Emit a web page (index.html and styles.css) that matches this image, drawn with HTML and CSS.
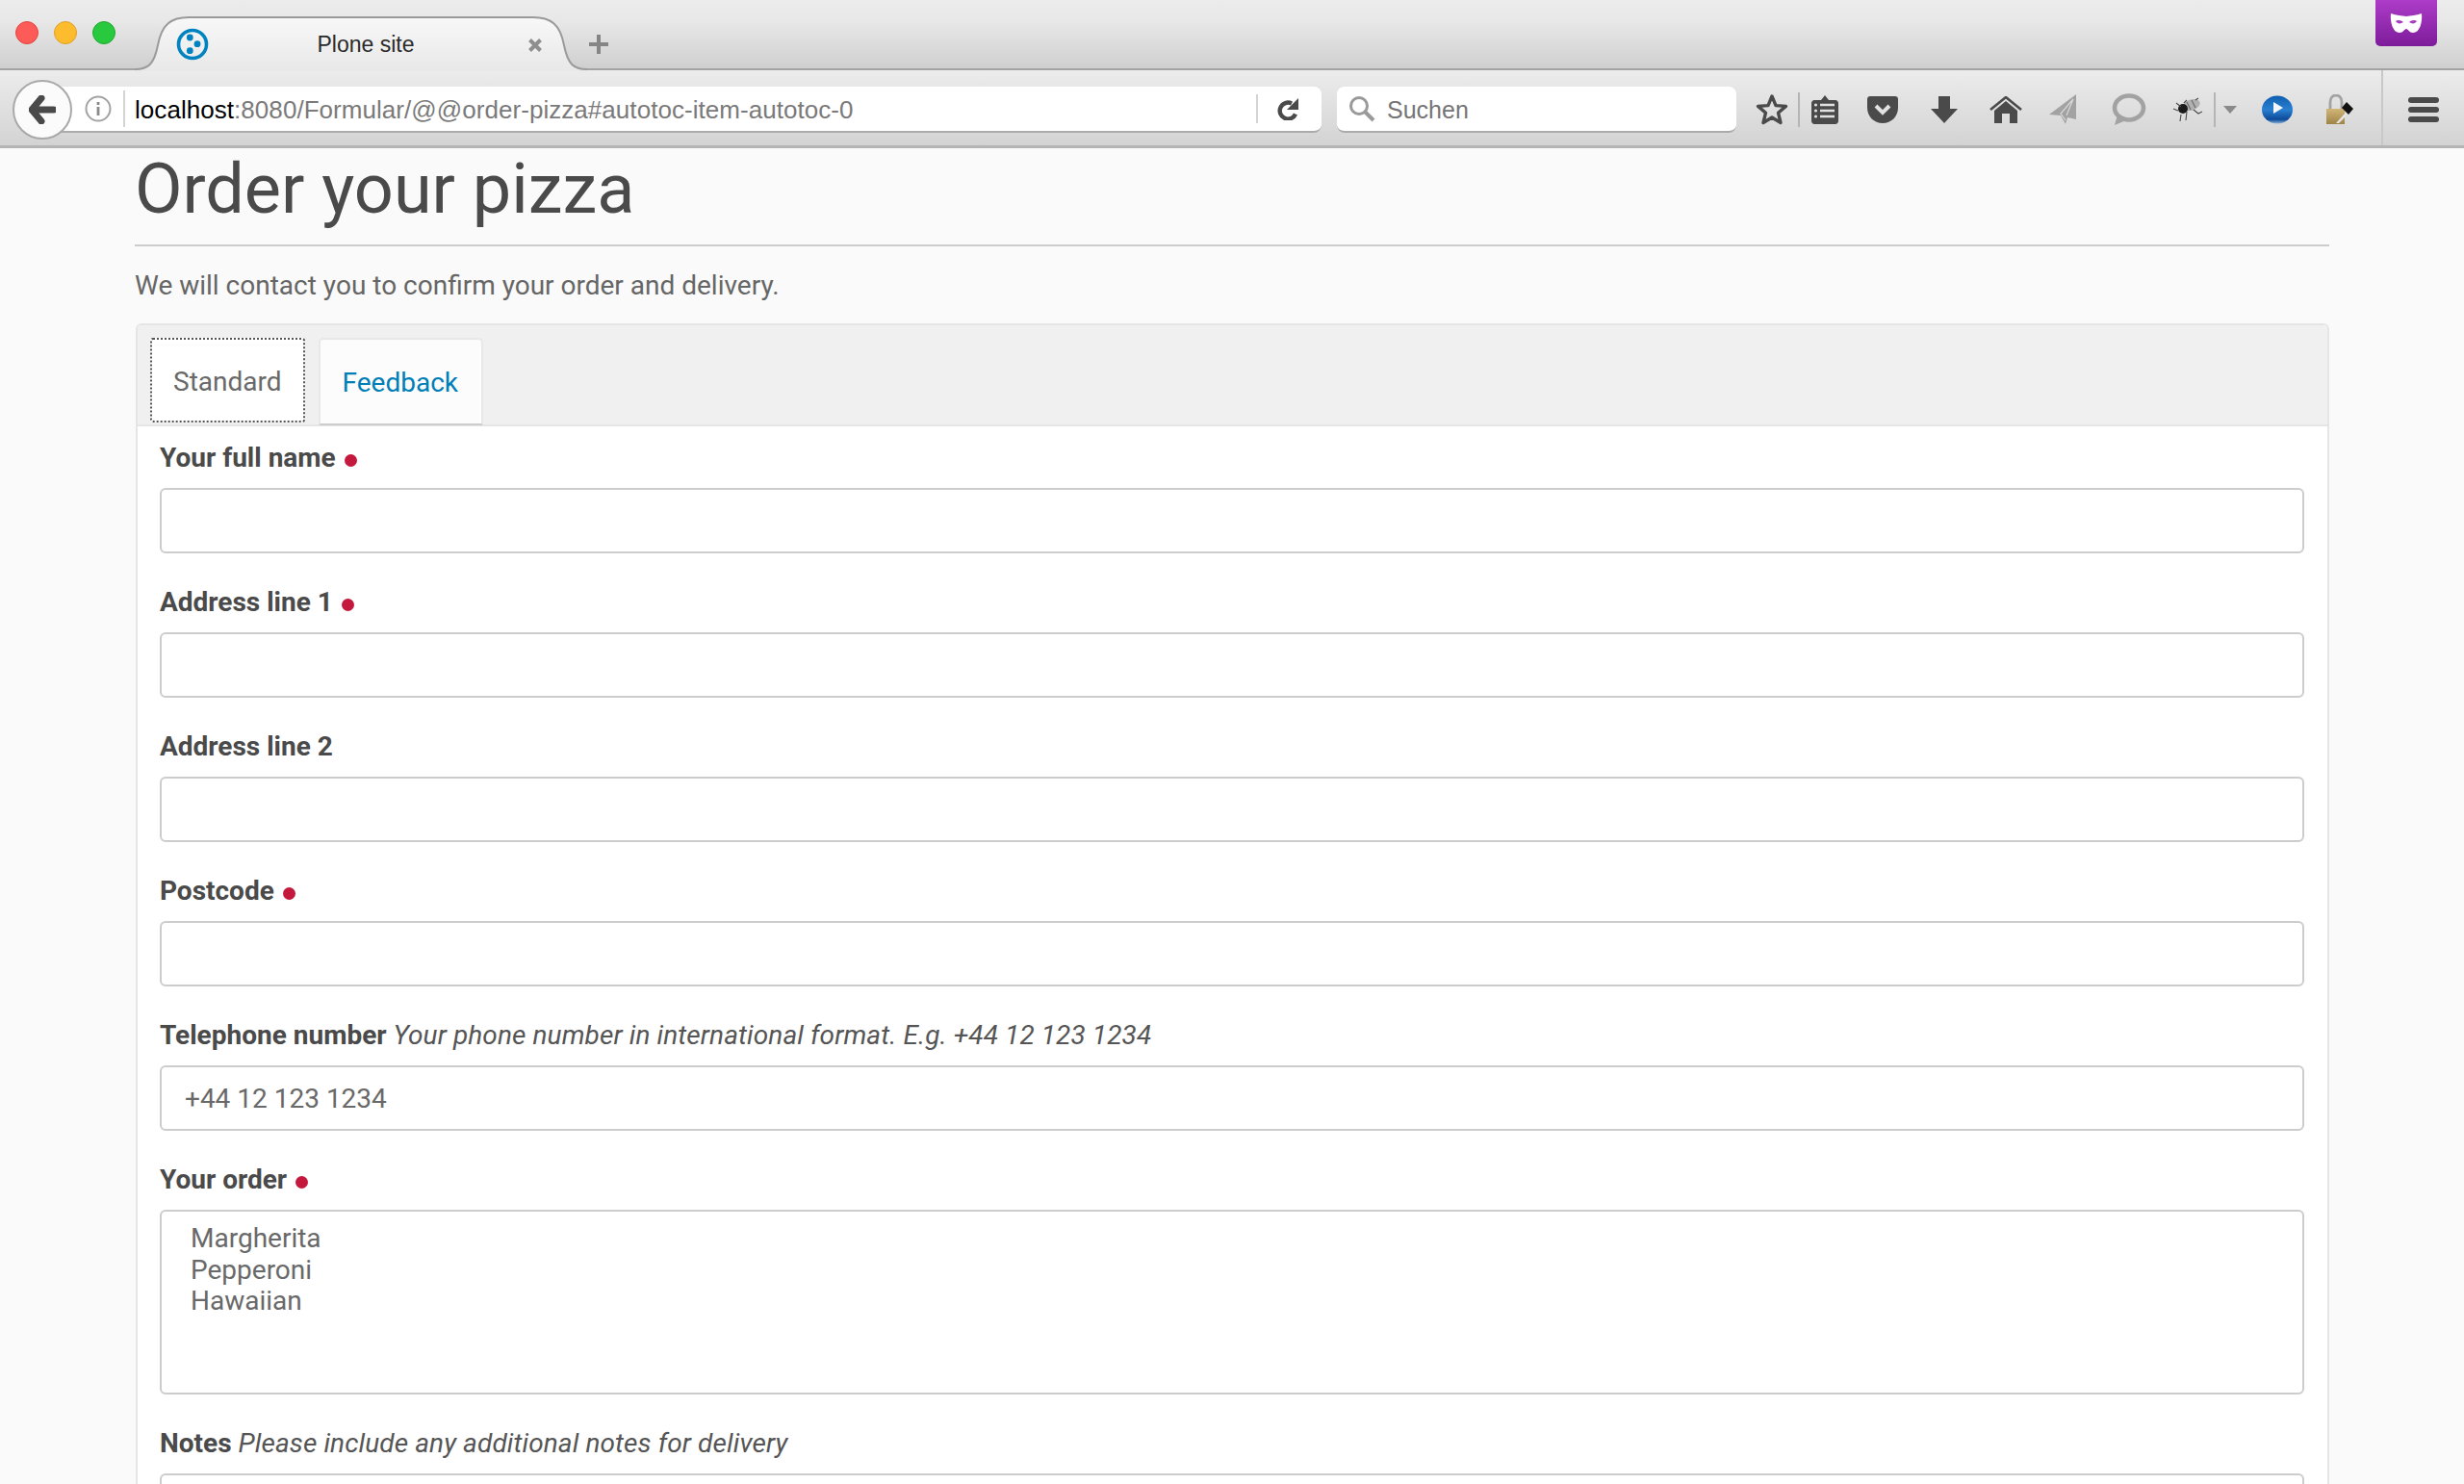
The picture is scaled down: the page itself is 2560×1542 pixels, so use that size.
FILE: index.html
```html
<!DOCTYPE html>
<html lang="en">
<head>
    <meta charset="UTF-8">
    <title>Plone site</title>
    <link rel="stylesheet" href="styles.css">
</head>
<body>

<header class="browser">
    <div class="tabbar">
        <div class="lights">
            <span class="light light-red"></span>
            <span class="light light-yellow"></span>
            <span class="light light-green"></span>
        </div>
        <div class="tab">
            <svg class="tab-shape" width="470" height="57" viewBox="0 0 470 57">
                <defs>
                    <linearGradient id="tabfill" x1="0" y1="0" x2="0" y2="1">
                        <stop offset="0" stop-color="#f8f8f8"/>
                        <stop offset="1" stop-color="#e8e8e8"/>
                    </linearGradient>
                </defs>
                <path d="M0 57V55C14 55 20 50 24 30C28 8 38 1 56 1H414C432 1 442 8 446 30C450 50 456 55 470 55V57Z" fill="url(#tabfill)"/>
                <path d="M0 55C14 55 20 50 24 30C28 8 38 1 56 1H414C432 1 442 8 446 30C450 50 456 55 470 55" fill="none" stroke="#9a9a9a" stroke-width="2"/>
            </svg>
            <svg class="favicon" width="34" height="34" viewBox="0 0 34 34">
                <circle cx="17" cy="17" r="14.5" fill="none" stroke="#0083be" stroke-width="3.6"/>
                <circle cx="14.300" cy="10" r="3.400" fill="#0083be"/>
                <circle cx="22" cy="16.700" r="3.400" fill="#0083be"/>
                <circle cx="14.300" cy="23.700" r="3.400" fill="#0083be"/>
            </svg>
            <span class="tab-title">Plone site</span>
            <svg class="tab-close" width="16" height="16" viewBox="0 0 16 16">
                <path d="M2.5 2.5L13.5 13.5M13.5 2.5L2.5 13.5" stroke="#8e8e8e" stroke-width="4"/>
            </svg>
        </div>
        <svg class="new-tab" width="20" height="20" viewBox="0 0 20 20">
            <path d="M10 0V20M0 10H20" stroke="#858585" stroke-width="4"/>
        </svg>
        <div class="mask-btn">
            <svg width="34" height="22" viewBox="0 0 34 22">
                <path d="M1 1C7 3 12 3 17 4C22 3 27 3 33 1C34 10 31 21 24 21C20 21 19 17 17 17C15 17 14 21 10 21C3 21 0 10 1 1Z" fill="#fff"/>
                <path d="M6 9C8 7 12 8 14 10C11 12 8 12 6 9ZM28 9C26 7 22 8 20 10C23 12 26 12 28 9Z" fill="#a73bc2"/>
            </svg>
        </div>
    </div>

    <div class="toolbar">
        <button class="back-btn">
            <svg width="28" height="30" viewBox="0 0 28 30">
                <path d="M13 3L3 15L13 27M4 15H26" fill="none" stroke="#4a4a4a" stroke-width="7" stroke-linejoin="round" stroke-linecap="round"/>
            </svg>
        </button>
        <div class="urlbar">
            <svg class="info-icon" width="28" height="28" viewBox="0 0 28 28">
                <circle cx="14" cy="14" r="12.5" fill="none" stroke="#a3a3a3" stroke-width="2"/>
                <rect x="12.6" y="12" width="2.8" height="9" fill="#8a8a8a"/>
                <rect x="12.6" y="7" width="2.8" height="3" fill="#8a8a8a"/>
            </svg>
            <span class="url-sep"></span>
            <span class="url-text"><span class="url-host">localhost</span>:8080/Formular/@@order-pizza#autotoc-item-autotoc-0</span>
            <span class="url-sep url-sep-end"></span>
            <svg class="reload-icon" width="24" height="24" viewBox="0 0 24 24">
                <path d="M16 6.500A8.500 8.500 0 1 0 20 17.500" fill="none" stroke="#4a4a4a" stroke-width="4.400"/>
                <path d="M23 1V13H11Z" fill="#4a4a4a"/>
            </svg>
        </div>
        <div class="searchbar">
            <svg width="30" height="30" viewBox="0 0 30 30">
                <circle cx="12" cy="12" r="8.5" fill="none" stroke="#9a9a9a" stroke-width="3"/>
                <path d="M18 18L27 27" stroke="#9a9a9a" stroke-width="4"/>
            </svg>
            <span class="search-text">Suchen</span>
        </div>

        <svg class="tool i-star" width="34" height="34" viewBox="0 0 34 34">
            <path d="M17 3L21 12.6L31.5 13.4L23.5 20.2L26 30.5L17 25L8 30.5L10.5 20.2L2.5 13.4L13 12.6Z" fill="none" stroke="#4a4a4a" stroke-width="3.4" stroke-linejoin="round"/>
        </svg>
        <span class="tool-sep i-sep1"></span>
        <svg class="tool i-clip" width="28" height="30" viewBox="0 0 28 30">
            <path d="M3 5H10L14 0L18 5H25C26.5 5 28 6.5 28 8V27C28 28.5 26.5 30 25 30H3C1.500 30 0 28.500 0 27V8C0 6.500 1.500 5 3 5Z" fill="#4a4a4a"/>
            <path d="M9 10H24M9 16H24M9 22H24" stroke="#e2e2e2" stroke-width="2.600"/>
            <circle cx="4.500" cy="10" r="1.600" fill="#e2e2e2"/>
            <circle cx="4.500" cy="16" r="1.600" fill="#e2e2e2"/>
            <circle cx="4.500" cy="22" r="1.600" fill="#e2e2e2"/>
        </svg>
        <svg class="tool i-pocket" width="32" height="28" viewBox="0 0 32 28">
            <path d="M3 0H29C30.700 0 32 1.300 32 3V12C32 21 25 28 16 28C7 28 0 21 0 12V3C0 1.300 1.300 0 3 0Z" fill="#4a4a4a"/>
            <path d="M9 10L16 17L23 10" fill="none" stroke="#e2e2e2" stroke-width="4"/>
        </svg>
        <svg class="tool i-down" width="30" height="28" viewBox="0 0 30 28">
            <path d="M9 0H21V13H29L15 28L1 13H9Z" fill="#4a4a4a"/>
        </svg>
        <svg class="tool i-home" width="34" height="28" viewBox="0 0 34 28">
            <path d="M1 14L17 1L33 14" fill="none" stroke="#4a4a4a" stroke-width="2.600"/>
            <path d="M17 5L29 15V28H21V18H13V28H5V15Z" fill="#4a4a4a"/>
        </svg>
        <svg class="tool i-plane" width="30" height="32" viewBox="0 0 30 32">
            <path d="M28 0L0 21L12 22L17 31L19 24L28 26Z" fill="#a2a2a2"/>
            <path d="M25 5L12 20L17 27M25 5L18 22" fill="none" stroke="#d8d8d8" stroke-width="1.200"/>
        </svg>
        <svg class="tool i-bubble" width="38" height="34" viewBox="0 0 38 34">
            <ellipse cx="20" cy="15" rx="15" ry="12.500" fill="none" stroke="#a2a2a2" stroke-width="4.600"/>
            <path d="M5 33L8 22L17 28Z" fill="#a2a2a2"/>
        </svg>
        <svg class="tool i-bug" width="32" height="26" viewBox="0 0 32 26">
            <ellipse cx="20" cy="8" rx="9" ry="5.500" fill="#b0b0b0" transform="rotate(-20 20 8)"/>
            <path d="M15 5L19 13M20 3L24 11" stroke="#5a5a5a" stroke-width="1"/>
            <ellipse cx="11" cy="12" rx="5" ry="5" fill="#1a1a1a"/>
            <path d="M1 12L6 14M4 6L9 10M9 18L8 25M15 15L14 24M22 13L27 17L31 15M24 3L27 1M12 6L15 3" stroke="#4a4a4a" stroke-width="1.100" fill="none"/>
        </svg>
        <span class="tool-sep i-sep2"></span>
        <svg class="tool i-tri" width="14" height="8" viewBox="0 0 14 8">
            <path d="M0 0H14L7 8Z" fill="#8a8a8a"/>
        </svg>
        <svg class="tool i-play" width="34" height="30" viewBox="0 0 34 30">
            <defs>
                <linearGradient id="playfill" x1="0" y1="0" x2="0" y2="1">
                    <stop offset="0" stop-color="#0f5fb0"/>
                    <stop offset="0.500" stop-color="#2a7fd0"/>
                    <stop offset="0.850" stop-color="#0d4a9a"/>
                    <stop offset="1" stop-color="#8fb4d8"/>
                </linearGradient>
            </defs>
            <ellipse cx="17" cy="15" rx="16" ry="14.500" fill="url(#playfill)"/>
            <path d="M13 7L23 13L13 19Z" fill="#f2f6fb"/>
        </svg>
        <svg class="tool i-lock" width="30" height="32" viewBox="0 0 30 32">
            <defs>
                <linearGradient id="lockfill" x1="0" y1="0" x2="0" y2="1">
                    <stop offset="0" stop-color="#d2b678"/>
                    <stop offset="1" stop-color="#9f8448"/>
                </linearGradient>
            </defs>
            <path d="M5 15V8C5 3 8 1 11 1C14 1 17 3 17 8V15" fill="none" stroke="#a2a2a2" stroke-width="2.800"/>
            <rect x="1" y="15" width="19" height="16" fill="url(#lockfill)"/>
            <path d="M17 14L22 8L29 15L24 21Z" fill="#111"/>
            <path d="M21 19L11 30H14L23 21Z" fill="#e6e6e6"/>
        </svg>
        <span class="tool-divider"></span>
        <div class="tool burger">
            <span></span><span></span><span></span>
        </div>
    </div>
</header>

<main class="page">
    <h1 class="page-title">Order your pizza</h1>
    <p class="page-lead">We will contact you to confirm your order and delivery.</p>

    <form class="card">
        <nav class="tabs">
            <a class="form-tab form-tab-active" href="#standard">Standard</a>
            <a class="form-tab" href="#feedback">Feedback</a>
        </nav>
        <div class="panel">
            <div class="field">
                <label for="f-name">Your full name <span class="required"></span></label>
                <input type="text" id="f-name">
            </div>
            <div class="field">
                <label for="f-addr1">Address line 1 <span class="required"></span></label>
                <input type="text" id="f-addr1">
            </div>
            <div class="field">
                <label for="f-addr2">Address line 2</label>
                <input type="text" id="f-addr2">
            </div>
            <div class="field">
                <label for="f-post">Postcode <span class="required"></span></label>
                <input type="text" id="f-post">
            </div>
            <div class="field">
                <label for="f-tel">Telephone number <span class="hint">Your phone number in international format. E.g. +44 12 123 1234</span></label>
                <input type="text" id="f-tel" value="+44 12 123 1234">
            </div>
            <div class="field">
                <label for="f-order">Your order <span class="required"></span></label>
                <textarea id="f-order">Margherita
Pepperoni
Hawaiian</textarea>
            </div>
            <div class="field">
                <label for="f-notes">Notes <span class="hint">Please include any additional notes for delivery</span></label>
                <textarea id="f-notes"></textarea>
            </div>
        </div>
    </form>
</main>

</body>
</html>
```

FILE: styles.css
```css
html, body {
    height: 100%;
    margin: 0;
    overflow: hidden;
}
body {
    background: #fafafa;
    font-family: 'Roboto', sans-serif;
    color: #4a4a4a;
}

/* browser window */
.tabbar {
    height: 73px;
    box-sizing: border-box;
    display: flex;
    align-items: flex-start;
    background: linear-gradient(#ececec, #e8e8e8 30%, #cfcfcf);
    border-bottom: 2px solid #a3a3a3;
    position: relative;
}
.lights {
    display: flex;
    gap: 16px;
    margin: 22px 0 0 16px;
}
.light {
    width: 24px;
    height: 24px;
    border-radius: 50%;
    box-sizing: border-box;
}
.light-red { background: #fc5b57; border: 1px solid #e4443f; }
.light-yellow { background: #fdbc2e; border: 1px solid #dfa023; }
.light-green { background: #28c83f; border: 1px solid #1fa92f; }
.tab {
    position: relative;
    width: 466px;
    height: 56px;
    margin: 17px 0 0 20px;
    display: flex;
    align-items: center;
}
.tab-shape {
    position: absolute;
    left: 0;
    top: 0;
}
.favicon {
    position: relative;
    flex: none;
    margin: 2px 0 0 43px;
}
.tab-title {
    position: relative;
    font-family: 'Liberation Sans', sans-serif;
    font-size: 23px;
    color: #2a2a2a;
    width: 240px;
    flex: none;
    text-align: center;
    margin: 2px 0 0 43px;
}
.tab-close {
    position: relative;
    flex: none;
    margin: 3px 0 0 48px;
}
.new-tab {
    margin: 36px 0 0 6px;
}
.mask-btn {
    width: 64px;
    height: 48px;
    margin-left: auto;
    margin-right: 28px;
    background: linear-gradient(#ad3cc8, #7d1c9a);
    border-radius: 0 0 5px 5px;
    display: flex;
    align-items: center;
    justify-content: center;
}
.toolbar {
    height: 81px;
    box-sizing: border-box;
    display: flex;
    align-items: center;
    padding: 4px 0 0 13px;
    background: linear-gradient(#ececec, #d3d3d3);
    border-bottom: 3px solid #b4b4b4;
}
.back-btn {
    width: 62px;
    height: 62px;
    padding: 0;
    flex: none;
    position: relative;
    z-index: 2;
    background: #fbfbfb;
    border: 2px solid #a9a9a9;
    border-radius: 50%;
    display: flex;
    align-items: center;
    justify-content: center;
}
.urlbar {
    width: 1323px;
    height: 48px;
    flex: none;
    margin-left: -25px;
    box-sizing: border-box;
    padding-left: 38px;
    display: flex;
    align-items: center;
    background: #fff;
    border-bottom: 2px solid #ababab;
    border-radius: 0 8px 8px 0;
}
.url-sep {
    width: 2px;
    height: 38px;
    background: #d4d4d4;
    margin-left: 12px;
}
.url-text {
    font-family: 'Liberation Sans', sans-serif;
    font-size: 26px;
    letter-spacing: 0.05px;
    color: #7a7a7a;
    margin: 2px 0 0 10px;
    white-space: nowrap;
}
.url-host { color: #000; }
.url-sep-end {
    height: 30px;
    margin-left: 418px;
}
.reload-icon { margin-left: 19px; }
.searchbar {
    width: 415px;
    height: 48px;
    flex: none;
    margin-left: 16px;
    box-sizing: border-box;
    padding-left: 11px;
    display: flex;
    align-items: center;
    background: #fff;
    border-bottom: 2px solid #ababab;
    border-radius: 8px;
}
.search-text {
    font-family: 'Liberation Sans', sans-serif;
    font-size: 25px;
    color: #757575;
    margin: 2px 0 0 11px;
}
.tool { flex: none; }
.tool-sep {
    width: 2px;
    height: 36px;
    flex: none;
    background: #b5b5b5;
}
.i-star { margin-left: 20px; }
.i-sep1 { margin-left: 10px; }
.i-clip { margin-left: 12px; }
.i-pocket { margin-left: 30px; }
.i-down { margin-left: 33px; }
.i-home { margin-left: 32px; }
.i-plane { margin-left: 28px; }
.i-bubble { margin-left: 33px; }
.i-bug { margin-left: 27px; }
.i-sep2 { margin-left: 11px; }
.i-tri { margin-left: 8px; }
.i-play { margin-left: 25px; }
.i-lock { margin-left: 33px; }
.tool-divider {
    width: 2px;
    align-self: stretch;
    margin: -4px 0 0 28px;
    background: #c8c8c8;
}
.burger {
    width: 32px;
    margin-left: 26px;
    display: flex;
    flex-direction: column;
    gap: 4px;
}
.burger span {
    height: 6px;
    background: #4a4a4a;
    border-radius: 3px;
}

/* page */
.page {
    padding: 0 140px;
}
.page-title {
    margin: 0;
    height: 102px;
    line-height: 86px;
    font-size: 72px;
    font-weight: 400;
    color: #4a4a4a;
    box-sizing: border-box;
    border-bottom: 2px solid #cccccc;
}
.page-lead {
    margin: 24px 0 22px;
    font-size: 28px;
    line-height: 34px;
    font-weight: 400;
    color: #666666;
}
.card {
    margin: 0 0 0 1px;
    background: #fff;
    border: 2px solid #e5e5e5;
    border-bottom: 0;
    border-radius: 6px 6px 0 0;
}
.tabs {
    height: 105px;
    box-sizing: border-box;
    display: flex;
    gap: 14px;
    padding: 13px 0 0 13px;
    background: #f0f0f0;
    border-bottom: 2px solid #e5e5e5;
    border-radius: 4px 4px 0 0;
}
.form-tab {
    height: 91px;
    padding: 2px 24px 0 23px;
    box-sizing: border-box;
    display: flex;
    align-items: center;
    font-size: 28px;
    font-weight: 400;
    text-decoration: none;
    color: #007eb6;
    background: #fcfcfc;
    border: 2px solid #e8e8e8;
    border-bottom-color: #cccccc;
    border-radius: 5px 5px 0 0;
}
.form-tab-active {
    padding: 2px 22px 0;
    color: #696969;
    background: #fff;
    border: 2px dotted #555;
    border-radius: 3px;
    height: 88px;
}
.panel {
    padding: 13px 24px 0 23px;
}
.field {
    margin-bottom: 31px;
}
.field label {
    display: block;
    height: 40px;
    line-height: 40px;
    margin-bottom: 11px;
    font-size: 28px;
    font-weight: 700;
    color: #4a4a4a;
}
.required {
    display: inline-block;
    width: 13px;
    height: 13px;
    margin-left: 2px;
    background: #c4183c;
    border-radius: 50%;
}
.hint {
    font-weight: 400;
    font-style: italic;
    letter-spacing: 0.1px;
    color: #555555;
}
.field input,
.field textarea {
    display: block;
    width: 100%;
    height: 68px;
    box-sizing: border-box;
    padding: 0 24px;
    font-family: 'Roboto', sans-serif;
    font-size: 28px;
    color: #696969;
    background: #fff;
    border: 2px solid #cccccc;
    border-radius: 6px;
    outline: none;
    resize: none;
}
.field textarea {
    height: 192px;
    padding: 12px 30px;
    line-height: 32.7px;
    overflow: hidden;
}
```
